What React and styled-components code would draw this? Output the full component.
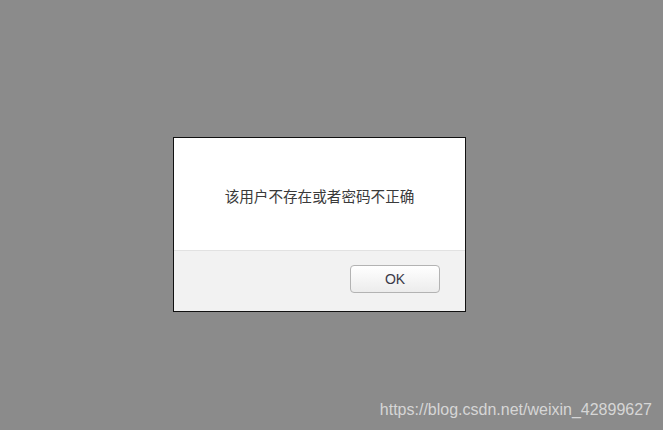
import styled, { createGlobalStyle } from "styled-components";

const Global = createGlobalStyle`
  html, body {
    margin: 0;
    padding: 0;
    background: #8b8b8b;
  }
  body {
    font-family: "Liberation Sans", "Noto Sans CJK SC", sans-serif;
  }
`;

const Page = styled.div`
  height: 100vh;
  box-sizing: border-box;
  display: flex;
  flex-direction: column;
  padding-top: 137px;
  padding-left: 173px;
`;

const Dialog = styled.div`
  width: 293px;
  box-sizing: border-box;
  border: 1px solid #111;
  background: #fff;
  display: flex;
  flex-direction: column;
`;

const Message = styled.div`
  height: 113px;
  box-sizing: border-box;
  padding-top: 3px;
  display: flex;
  align-items: center;
  justify-content: center;
  font-family: "Noto Sans CJK SC", "Liberation Sans", sans-serif;
  font-size: 14.6px;
  color: #3a3a3a;
  border-bottom: 1px solid #e2e2e2;
`;

const Footer = styled.div`
  height: 60px;
  background: #f2f2f2;
  display: flex;
  justify-content: flex-end;
  align-items: flex-start;
  padding: 14px 25px 0 0;
  box-sizing: border-box;
`;

const Button = styled.button`
  width: 90px;
  height: 28px;
  border: 1px solid #b3b3b3;
  border-radius: 4px;
  background: linear-gradient(#ffffff, #ececec);
  font-family: "Liberation Sans", sans-serif;
  font-size: 14px;
  color: #3a3a48;
  padding: 0;
`;

const Watermark = styled.div`
  margin-top: auto;
  align-self: flex-end;
  padding: 0 11px 11px 0;
  font-family: "Liberation Sans", sans-serif;
  font-size: 16px;
  line-height: 18px;
  color: #d6d6d6;
`;

const App = () => {
  return (
    <>
      <Global />
      <Page>
        <Dialog>
          <Message>该用户不存在或者密码不正确</Message>
          <Footer>
            <Button>OK</Button>
          </Footer>
        </Dialog>
        <Watermark>https://blog.csdn.net/weixin_42899627</Watermark>
      </Page>
    </>
  );
};

export default App;
